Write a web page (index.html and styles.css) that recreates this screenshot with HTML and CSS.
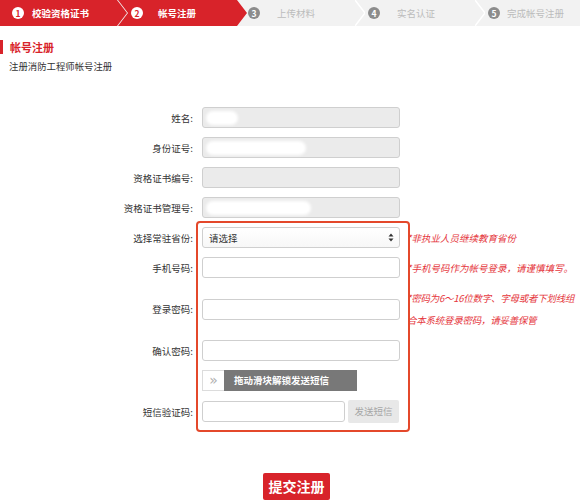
FILE: index.html
```html
<!DOCTYPE html>
<html lang="zh-CN">
<head>
<meta charset="utf-8">
<title>帐号注册</title>
<link rel="stylesheet" href="styles.css">
</head>
<body>
<div class="steps">
  <div class="step s1 on"><span class="num">1</span><span class="lbl">校验资格证书</span></div>
  <div class="step s2 on"><span class="num">2</span><span class="lbl">帐号注册</span></div>
  <div class="step s3"><span class="num">3</span><span class="lbl">上传材料</span></div>
  <svg class="sep" width="10" height="26" viewBox="0 0 10 26"><polyline points="0,0 10,13 0,26" fill="none" stroke="#ffffff" stroke-width="1.5"/></svg>
  <div class="step s4"><span class="num">4</span><span class="lbl">实名认证</span></div>
  <svg class="sep" width="10" height="26" viewBox="0 0 10 26"><polyline points="0,0 10,13 0,26" fill="none" stroke="#ffffff" stroke-width="1.5"/></svg>
  <div class="step s5"><span class="num">5</span><span class="lbl">完成帐号注册</span></div>
</div>

<div class="head">
  <h1 class="title">帐号注册</h1>
  <p class="sub">注册消防工程师帐号注册</p>
</div>

<form class="form">
  <div class="row">
    <label class="label">姓名:</label>
    <div class="input disabled"><span class="blob b1"></span></div>
  </div>
  <div class="row">
    <label class="label">身份证号:</label>
    <div class="input disabled"><span class="blob b2"></span></div>
  </div>
  <div class="row">
    <label class="label">资格证书编号:</label>
    <div class="input disabled"></div>
  </div>
  <div class="row">
    <label class="label">资格证书管理号:</label>
    <div class="input disabled"><span class="blob b3"></span></div>
  </div>

  <div class="group">
    <div class="row">
      <label class="label">选择常驻省份:</label>
      <div class="input select"><span>请选择</span>
        <svg class="arrows" width="6" height="9" viewBox="0 0 6 9"><path d="M3 0.5 L5.5 3.5 H0.5 Z M3 8.5 L5.5 5.5 H0.5 Z" fill="#333"/></svg>
      </div>
      <span class="hint">*非执业人员继续教育省份</span>
    </div>
    <div class="row">
      <label class="label">手机号码:</label>
      <div class="input"></div>
      <span class="hint">*手机号码作为帐号登录，请谨慎填写。</span>
    </div>
    <div class="row">
      <label class="label">登录密码:</label>
      <div class="input"></div>
      <span class="hint tall">*密码为6～16位数字、字母或者下划线组<br>合本系统登录密码，请妥善保管</span>
    </div>
    <div class="row">
      <label class="label">确认密码:</label>
      <div class="input"></div>
    </div>
    <div class="row">
      <span class="label"></span>
      <div class="slider"><span class="handle">»</span><span class="track">拖动滑块解锁发送短信</span></div>
    </div>
    <div class="row last">
      <label class="label">短信验证码:</label>
      <div class="input sms"></div>
      <span class="smsbtn">发送短信</span>
    </div>
  </div>

  <div class="submit-row">
    <button type="button" class="submit">提交注册</button>
  </div>
</form>
</body>
</html>
```
FILE: styles.css
```css
* { box-sizing: border-box; }
html, body { margin: 0; padding: 0; background: #fff; }
body {
  font-family: "Noto Sans CJK SC", "Noto Sans", "Liberation Sans", sans-serif;
  color: #333;
  width: 580px;
  height: 504px;
  overflow: hidden;
}

/* steps bar */
.steps {
  display: flex;
  height: 26px;
  background: #f2f2f2;
}
.step {
  display: flex;
  align-items: center;
  height: 26px;
  font-size: 9.5px;
  color: #bcbcbc;
  flex: none;
}
.step .num {
  width: 12px;
  height: 12px;
  border-radius: 50%;
  background: #8c8c8c;
  color: #fff;
  font-size: 8.5px;
  font-weight: 700;
  line-height: 12px;
  text-align: center;
  flex: none;
}
.step.on { background: #d8232a; color: #fff; font-weight: 700; }
.step.on .num { background: #fff; color: #d8232a; }
.s1 {
  width: 127px;
  padding-left: 12px;
  gap: 8px;
  clip-path: polygon(0 0, 117px 0, 127px 50%, 117px 100%, 0 100%);
}
.s2 {
  width: 129px;
  margin-left: -9px;
  padding-left: 13px;
  gap: 15px;
  clip-path: polygon(0 0, 119px 0, 129px 50%, 119px 100%, 0 100%, 10px 50%);
}
.s3 { width: 108px; padding-left: 1px; gap: 17px; }
.s4 { width: 110px; padding-left: 3px; gap: 17px; }
.s5 { flex: 1; padding-left: 3px; gap: 7px; }
.sep { flex: none; display: block; }

/* heading */
.head { padding-top: 14px; }
.title {
  margin: 0;
  border-left: 3px solid #d8232a;
  padding-left: 7px;
  font-size: 11px;
  line-height: 14px;
  font-weight: 700;
  color: #d8232a;
}
.sub {
  margin: 5px 0 0 9px;
  font-size: 9.4px;
  line-height: 14px;
  color: #333;
}

/* form */
.form { padding-top: 34px; }
.row {
  display: flex;
  align-items: center;
  min-height: 21px;
  margin-bottom: 9px;
}
.row.last { margin-bottom: 0; }
.label {
  width: 193px;
  margin-right: 9px;
  text-align: right;
  font-size: 9.5px;
  color: #333;
  flex: none;
}
.input {
  width: 198px;
  height: 21px;
  border: 1px solid #cfcfcf;
  border-radius: 3px;
  background: #fff;
  flex: none;
  display: flex;
  align-items: center;
  padding-left: 3px;
}
.input.disabled { background: #ebebeb; }
.blob {
  display: block;
  height: 14px;
  background: #fff;
  border-radius: 8px;
  filter: blur(1.5px);
}
.b1 { width: 32px; }
.b2 { width: 100px; }
.b3 { width: 105px; }

.select {
  justify-content: space-between;
  padding: 0 5px 0 6px;
  font-size: 9.5px;
  color: #333;
  background: linear-gradient(#fff, #f7f7f7);
}
.arrows { display: block; }

.group { position: relative; margin-top: 1px; }
.group::before {
  content: "";
  position: absolute;
  left: 196px;
  width: 210px;
  top: -6px;
  bottom: -9px;
  border: 2px solid #e4482b;
  border-radius: 4px;
  pointer-events: none;
}

.hint {
  margin-left: 7px;
  font-size: 9.5px;
  font-style: italic;
  color: #e5363c;
  white-space: nowrap;
  line-height: 14px;
}
.hint.tall { line-height: 22px; letter-spacing: -0.25px; }

.slider {
  display: flex;
  width: 155px;
  height: 21px;
  flex: none;
}
.handle {
  width: 22px;
  border: 1px solid #dcdcdc;
  border-right: none;
  background: #fff;
  color: #b0b0b0;
  font-family: "DejaVu Sans", sans-serif;
  font-size: 14px;
  line-height: 18px;
  text-align: center;
}
.track {
  flex: 1;
  background: #787878;
  color: #fff;
  font-size: 9.5px;
  font-weight: 700;
  line-height: 21px;
  padding-left: 10px;
}

.input.sms { width: 143px; }
.smsbtn {
  margin-left: 3px;
  width: 51px;
  height: 23px;
  border-radius: 2px;
  background: #e8e8e8;
  color: #a6a6a6;
  font-size: 9.5px;
  line-height: 23px;
  text-align: center;
  flex: none;
}

.submit-row { padding: 50px 0 0 263px; }
.submit {
  display: block;
  width: 67px;
  height: 27px;
  margin: 0;
  padding: 0;
  border: none;
  border-radius: 2px;
  background: #d8232a;
  color: #fff;
  font-family: inherit;
  font-size: 14px;
  font-weight: 700;
  line-height: 27px;
  text-align: center;
}
```
